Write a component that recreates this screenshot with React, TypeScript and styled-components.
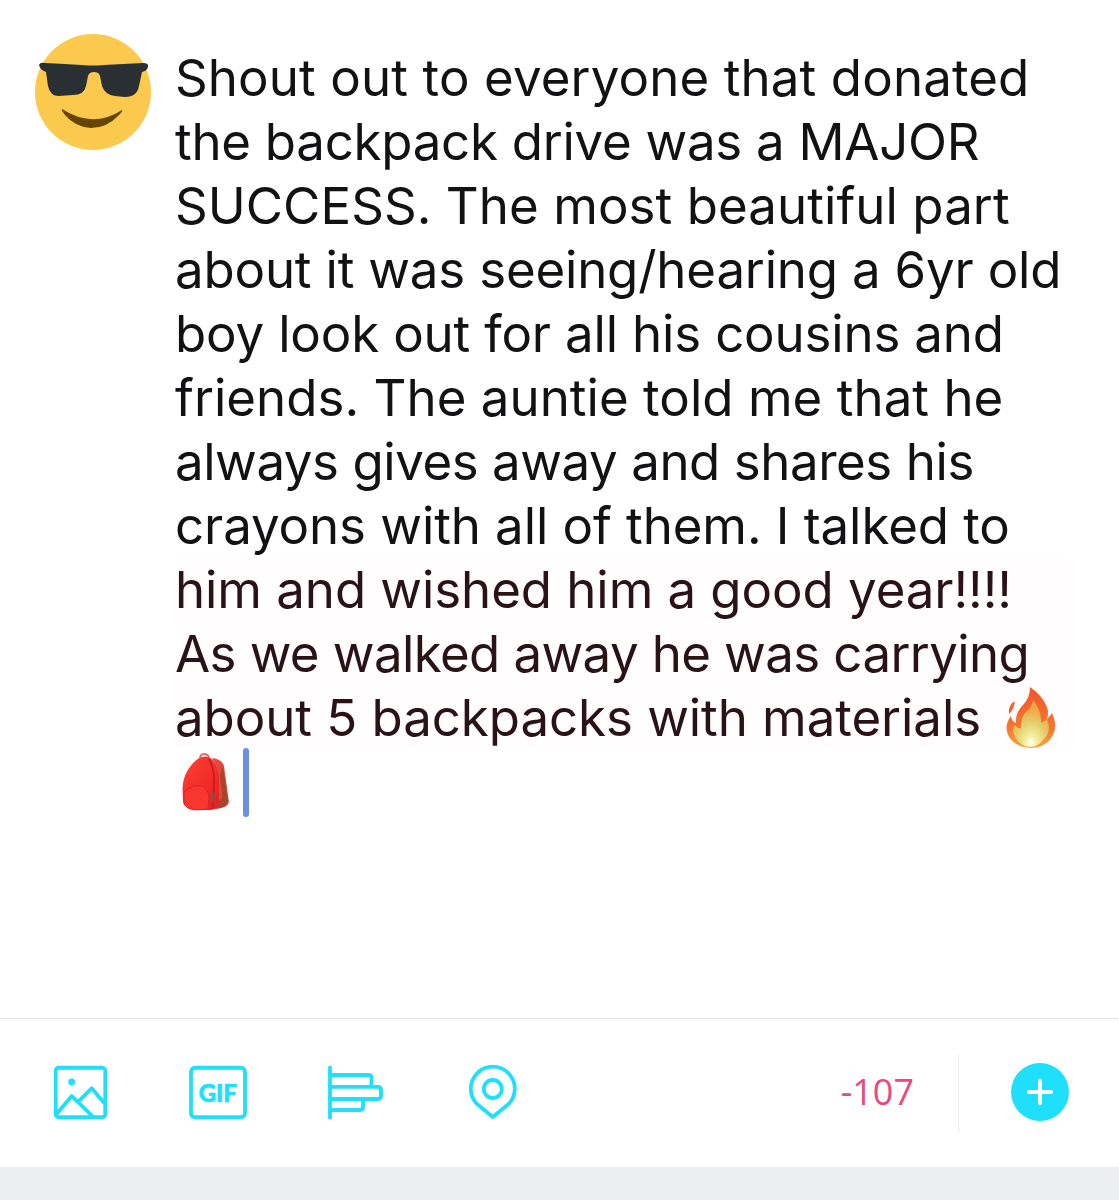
import React from "react";
import styled, { createGlobalStyle } from "styled-components";

const GlobalStyle = createGlobalStyle`
  html, body {
    margin: 0;
    padding: 0;
    background: #ffffff;
  }
`;

const CYAN = "#1fdffb";

// track = letter spacing that brings each line to the reference's line end
const LINES = [
  { text: "Shout out to everyone that donated", track: 0.12 },
  { text: "the backpack drive was a MAJOR", track: -0.27 },
  { text: "SUCCESS. The most beautiful part", track: 0.06 },
  { text: "about it was seeing/hearing a 6yr old", track: -0.19 },
  { text: "boy look out for all his cousins and", track: -0.17 },
  { text: "friends. The auntie told me that he", track: 0.03 },
  { text: "always gives away and shares his", track: -0.44 },
  { text: "crayons with all of them. I talked to", track: -0.08 },
  { text: "him and wished him a good year!!!!", track: -0.07, warm: true },
  { text: "As we walked away he was carrying", track: -0.6, warm: true },
];

const Screen = styled.div`
  width: 1119px;
  height: 1200px;
  display: flex;
  flex-direction: column;
  background: #ffffff;
  overflow: hidden;
`;

const Composer = styled.section`
  height: 1019px;
  display: flex;
  align-items: flex-start;
  padding: 34px 0 0 35px;
  box-sizing: border-box;
  border-bottom: 1px solid #e3e5e8;
`;

const Avatar = styled.svg`
  width: 116px;
  height: 116px;
  flex: none;
`;

const Message = styled.div`
  width: 895px;
  margin-left: 25px;
  margin-top: 12px;
  font-family: "Inter", "Liberation Sans", sans-serif;
  font-size: 51px;
  line-height: 64px;
  white-space: nowrap;
`;

const Line = styled.div<{ $warm?: boolean; $track?: number }>`
  height: 64px;
  display: flex;
  align-items: center;
  margin-left: -1px;
  letter-spacing: ${(p) => p.$track ?? 0}px;
  color: ${(p) => (p.$warm ? "#2a1316" : "#121214")};
  background: ${(p) => (p.$warm ? "#fffdfe" : "transparent")};
`;

const Fire = styled.svg`
  width: 50px;
  height: 62px;
  margin-left: 25px;
  flex: none;
`;

const Backpack = styled.svg`
  width: 48px;
  height: 60px;
  margin-left: 7px;
  flex: none;
`;

const Caret = styled.span`
  width: 6px;
  height: 69px;
  margin-left: 13px;
  border-radius: 3px;
  background: #6c8de8;
`;

const Toolbar = styled.div`
  height: 148px;
  display: flex;
  align-items: center;
  padding-left: 52px;
`;

const ToolIcon = styled.svg<{ $gap: number; $width?: number }>`
  width: ${(p) => p.$width ?? 58}px;
  height: 58px;
  flex: none;
  margin-right: ${(p) => p.$gap}px;
  fill: none;
  stroke: ${CYAN};
  stroke-width: 3.8;
  stroke-linecap: round;
  stroke-linejoin: round;
`;

const GifLabel = styled.text`
  font-family: "Lato", "Inter", sans-serif;
  font-size: 24px;
  font-weight: 900;
  fill: ${CYAN};
  stroke: ${CYAN};
  stroke-width: 0.7;
`;

const Counter = styled.span`
  margin-left: auto;
  margin-bottom: 3px;
  font-family: "Open Sans", sans-serif;
  font-size: 36px;
  color: #ea4a7b;
`;

const Divider = styled.span`
  width: 1px;
  height: 78px;
  margin-left: 44px;
  background: #eceef0;
`;

const PostButton = styled.button`
  width: 58px;
  height: 58px;
  margin: 0 50px 2px 52px;
  padding: 0;
  border: 0;
  border-radius: 50%;
  background: ${CYAN};
  display: flex;
  align-items: center;
  justify-content: center;
`;

const Footer = styled.div`
  flex: 1;
  background: #eceef1;
`;

const App = () => {
  return (
    <Screen>
      <GlobalStyle />
      <Composer>
        <Avatar viewBox="0 0 116 116">
          <circle cx="58" cy="58" r="58" fill="#fcc94f" />
          <path
            d="M4 31 Q5 28 10 29 Q30 30 47 31 Q58 32 69 31 Q88 30 108 29 Q114 29 113 33 Q112 37 107 38 L104 52 Q102 63 90 63 L80 62 Q70 61 67 52 L65 42 Q64 38 59 38 Q54 38 53 42 L51 52 Q49 61 38 61 L24 62 Q15 62 13 52 L11 38 Q5 36 4 31 Z"
            fill="#292f33"
          />
          <path
            d="M27 75 Q58 95 87 76 Q88 77 84 81 Q72 94 56 94 Q40 93 30 81 Q26 76 27 75 Z"
            fill="#664500"
          />
        </Avatar>
        <Message>
          {LINES.map((line) => (
            <Line key={line.text} $warm={line.warm} $track={line.track}>
              {line.text}
            </Line>
          ))}
          <Line $warm $track={-0.06}>
            about 5 backpacks with materials
            <Fire viewBox="0 0 50 62">
              <defs>
                <radialGradient id="flameCore" cx="50%" cy="90%" r="70%">
                  <stop offset="0" stopColor="#ffffff" />
                  <stop offset="0.22" stopColor="#f3f0a0" />
                  <stop offset="0.6" stopColor="#e4cf6e" />
                  <stop offset="1" stopColor="#f0a848" />
                </radialGradient>
                <linearGradient id="flameEdge" x1="0" y1="0" x2="0" y2="1">
                  <stop offset="0" stopColor="#f2552b" />
                  <stop offset="0.7" stopColor="#f47a30" />
                  <stop offset="1" stopColor="#f6a840" />
                </linearGradient>
              </defs>
              <path
                d="M24 0 Q36 8 41 20 Q43 26 41 32 Q44 29 46 26 Q52 38 47 48 Q40 61 24 61 Q8 60 2 48 Q-2 38 5 29 Q6 35 10 36 Q9 26 17 18 Q24 11 24 0 Z"
                fill="url(#flameEdge)"
              />
              <path d="M6 16 Q9 14 9 15 Q7 24 3 27 Q2 21 6 16 Z" fill="#f2662e" />
              <path
                d="M27 13 Q36 24 35 36 Q39 34 41 32 Q46 44 38 52 Q32 60 24 60 Q14 59 9 50 Q5 42 9 38 Q12 42 15 41 Q14 30 21 24 Q26 20 27 13 Z"
                fill="url(#flameCore)"
              />
            </Fire>
          </Line>
          <Line>
            <Backpack viewBox="0 0 48 60">
              <defs>
                <linearGradient id="bagBody" x1="0" y1="0" x2="1" y2="1">
                  <stop offset="0" stopColor="#ff4238" />
                  <stop offset="1" stopColor="#e61d20" />
                </linearGradient>
              </defs>
              <path d="M18 7 Q18 2 22 2 Q27 2 27 7" fill="none" stroke="#ec6a5e" strokeWidth="2" />
              <path d="M30 6 Q40 7 42 14 L47 50 Q46 56 33 57 L36 24 Q36 14 30 6 Z" fill="#e2483c" />
              <path d="M41 14 L46 50 Q45 55 33 57 L35 50 L40 46 L38 22 Z" fill="#a8452e" />
              <path
                d="M11 11 Q19 3 26 5 Q35 8 37 24 L37 50 Q36 57 29 58 L14 58 Q2 57 1 50 L0.5 36 Q1 22 11 11 Z"
                fill="url(#bagBody)"
              />
              <path
                d="M2 40 Q10 32 20 34 Q27 38 27 46 L26 57 L14 58 Q3 57 2 50 Z"
                fill="#f8362f"
                stroke="#d8201f"
                strokeWidth="0.8"
              />
              <path d="M27 7 Q33 18 32 34 L31 56" fill="none" stroke="#c41c1f" strokeWidth="1.6" />
              <path d="M30 40 L33 41 L32 50 L30 50 Z" fill="#7d5346" />
            </Backpack>
            <Caret />
          </Line>
        </Message>
      </Composer>
      <Toolbar>
        <ToolIcon $gap={78} viewBox="0 0 58 58">
          <rect x="3.75" y="3.75" width="49.5" height="49.5" rx="3" />
          <circle cx="19.7" cy="18" r="3.4" fill={CYAN} stroke="none" />
          <path d="M4.7 50 L19.7 32 L41.3 53 M27.3 36.7 L39.7 24.3 L52 38.7" />
        </ToolIcon>
        <ToolIcon $gap={78} $width={60} viewBox="0 0 60 58">
          <rect x="3" y="3.75" width="54" height="49.5" rx="4" />
          <GifLabel x="29.8" y="37.7" textAnchor="middle">
            GIF
          </GifLabel>
        </ToolIcon>
        <ToolIcon $gap={80} viewBox="0 0 58 58">
          <path d="M4 3.5 V53.5" />
          <path d="M4 11 H42.5 Q45.5 11 45.5 14 V22.8 M4 22.8 H52 Q55 22.8 55 25.8 V32 Q55 35 52 35 H4 M4 46 H34 Q37 46 37 43 V35" />
        </ToolIcon>
        <ToolIcon $gap={0} viewBox="0 0 58 58">
          <path d="M28.8 53 L13 40 A22 22 0 1 1 44.6 40 Z" />
          <circle cx="28.8" cy="25" r="9" />
        </ToolIcon>
        <Counter>-107</Counter>
        <Divider />
        <PostButton>
          <svg width="30" height="30" viewBox="0 0 30 30">
            <path d="M15 4 V26 M4 15 H26" stroke="#fff" strokeWidth="4" strokeLinecap="round" />
          </svg>
        </PostButton>
      </Toolbar>
      <Footer />
    </Screen>
  );
};

export default App;
